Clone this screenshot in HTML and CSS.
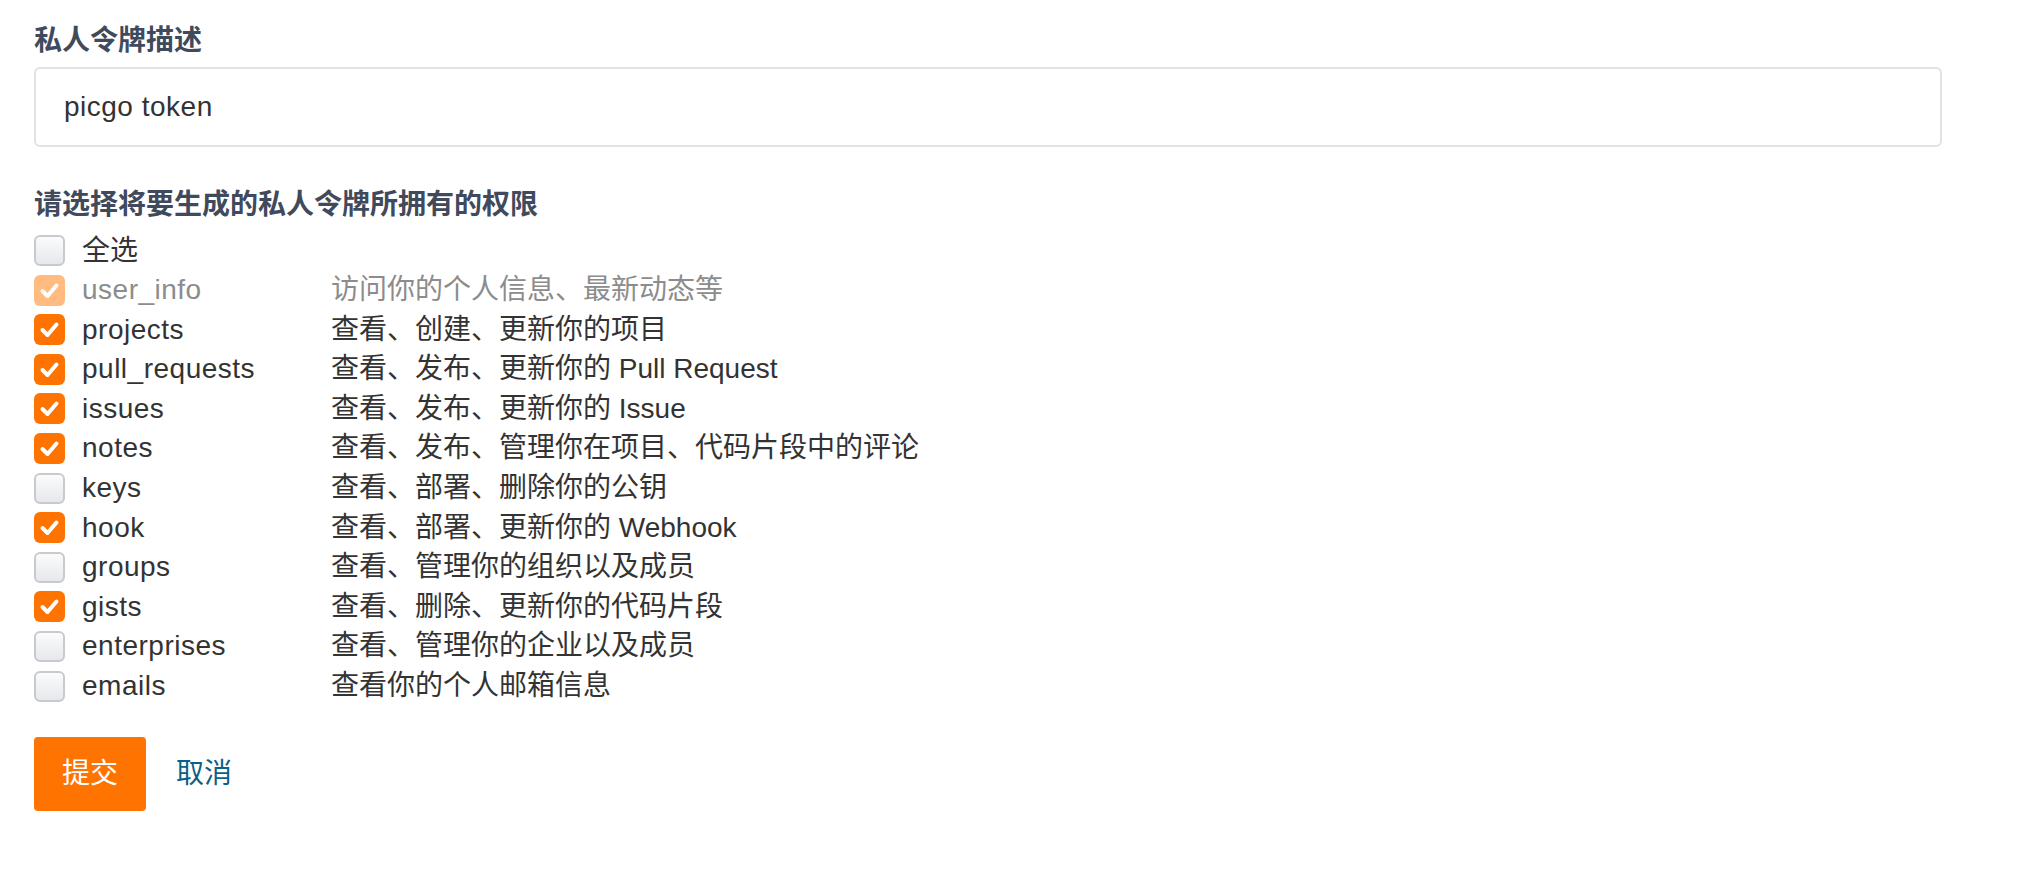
FILE: index.html
```html
<!DOCTYPE html>
<html lang="zh-CN">
<head>
<meta charset="utf-8">
<title>私人令牌</title>
<link rel="stylesheet" href="styles.css">
</head>
<body>
<form class="token-form">
  <div class="field-label">私人令牌描述</div>
  <div class="text-input">picgo token</div>

  <div class="section-label">请选择将要生成的私人令牌所拥有的权限</div>
  <div class="scopes">
    <div class="scope">
      <div class="scope-name"><span class="cb"></span><span>全选</span></div>
    </div>
    <div class="scope disabled">
      <div class="scope-name"><span class="cb checked"><svg viewBox="0 0 31 31"><path d="M8.5 16 L13.5 21 L22.5 10.5"/></svg></span><span class="latin">user_info</span></div>
      <div class="scope-desc">访问你的个人信息、最新动态等</div>
    </div>
    <div class="scope">
      <div class="scope-name"><span class="cb checked"><svg viewBox="0 0 31 31"><path d="M8.5 16 L13.5 21 L22.5 10.5"/></svg></span><span class="latin">projects</span></div>
      <div class="scope-desc">查看、创建、更新你的项目</div>
    </div>
    <div class="scope">
      <div class="scope-name"><span class="cb checked"><svg viewBox="0 0 31 31"><path d="M8.5 16 L13.5 21 L22.5 10.5"/></svg></span><span class="latin">pull_requests</span></div>
      <div class="scope-desc">查看、发布、更新你的 Pull Request</div>
    </div>
    <div class="scope">
      <div class="scope-name"><span class="cb checked"><svg viewBox="0 0 31 31"><path d="M8.5 16 L13.5 21 L22.5 10.5"/></svg></span><span class="latin">issues</span></div>
      <div class="scope-desc">查看、发布、更新你的 Issue</div>
    </div>
    <div class="scope">
      <div class="scope-name"><span class="cb checked"><svg viewBox="0 0 31 31"><path d="M8.5 16 L13.5 21 L22.5 10.5"/></svg></span><span class="latin">notes</span></div>
      <div class="scope-desc">查看、发布、管理你在项目、代码片段中的评论</div>
    </div>
    <div class="scope">
      <div class="scope-name"><span class="cb"></span><span class="latin">keys</span></div>
      <div class="scope-desc">查看、部署、删除你的公钥</div>
    </div>
    <div class="scope">
      <div class="scope-name"><span class="cb checked"><svg viewBox="0 0 31 31"><path d="M8.5 16 L13.5 21 L22.5 10.5"/></svg></span><span class="latin">hook</span></div>
      <div class="scope-desc">查看、部署、更新你的 Webhook</div>
    </div>
    <div class="scope">
      <div class="scope-name"><span class="cb"></span><span class="latin">groups</span></div>
      <div class="scope-desc">查看、管理你的组织以及成员</div>
    </div>
    <div class="scope">
      <div class="scope-name"><span class="cb checked"><svg viewBox="0 0 31 31"><path d="M8.5 16 L13.5 21 L22.5 10.5"/></svg></span><span class="latin">gists</span></div>
      <div class="scope-desc">查看、删除、更新你的代码片段</div>
    </div>
    <div class="scope">
      <div class="scope-name"><span class="cb"></span><span class="latin">enterprises</span></div>
      <div class="scope-desc">查看、管理你的企业以及成员</div>
    </div>
    <div class="scope">
      <div class="scope-name"><span class="cb"></span><span class="latin">emails</span></div>
      <div class="scope-desc">查看你的个人邮箱信息</div>
    </div>
  </div>

  <div class="actions">
    <span class="btn-submit">提交</span>
    <a class="link-cancel" href="#">取消</a>
  </div>
</form>
</body>
</html>
```

FILE: styles.css
```css
html, body {
  margin: 0;
  padding: 0;
  background: #ffffff;
}

body {
  font-family: "Liberation Sans", "Noto Sans CJK SC", sans-serif;
  font-size: 28px;
  line-height: 40px;
  color: #333333;
}

.token-form {
  width: 1908px;
  padding: 21px 0 0 34px;
}

.field-label,
.section-label {
  font-weight: 700;
  color: #404a5c;
}

.text-input {
  margin-top: 6px;
  height: 76px;
  box-sizing: content-box;
  border: 2px solid #dfe3e8;
  border-radius: 6px;
  padding: 0 28px;
  display: flex;
  align-items: center;
  color: #333333;
  letter-spacing: 0.5px;
}

.section-label {
  margin-top: 38px;
}

.scopes {
  margin-top: 5.5px;
  display: flex;
  flex-direction: column;
}

.scope {
  display: grid;
  grid-template-columns: 297px 1fr;
  height: 39.6px;
  align-items: center;
}

.scope-name {
  display: flex;
  align-items: center;
  gap: 17px;
}

.latin {
  letter-spacing: 0.5px;
}

.cb {
  width: 31px;
  height: 31px;
  box-sizing: border-box;
  border: 2px solid #c7cacf;
  border-radius: 6px;
  background: linear-gradient(#fbfbfc, #e6e8ec);
  flex: none;
  display: flex;
}

.cb.checked {
  border: none;
  background: #ff7300;
}

.cb svg {
  width: 31px;
  height: 31px;
}

.cb svg path {
  fill: none;
  stroke: #ffffff;
  stroke-width: 4;
  stroke-linecap: round;
  stroke-linejoin: round;
}

.scope.disabled {
  color: #8c8c8c;
}

.scope.disabled .cb.checked {
  background: #ffbb80;
}

.actions {
  margin-top: 31px;
  display: flex;
  align-items: center;
  gap: 30px;
}

.btn-submit {
  background: #ff7300;
  color: #ffffff;
  border-radius: 4px;
  padding: 17px 28px;
  line-height: 40px;
}

.link-cancel {
  color: #0c5f88;
  text-decoration: none;
}
```
